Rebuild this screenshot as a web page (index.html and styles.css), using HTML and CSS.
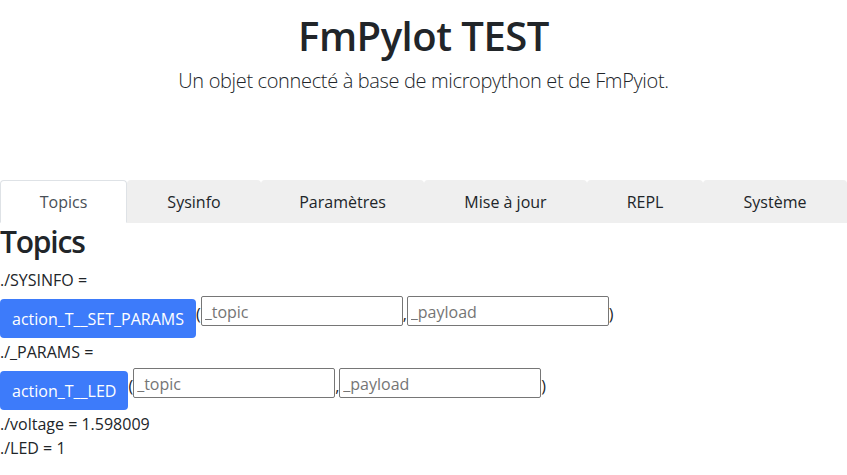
FILE: index.html
```html
<!DOCTYPE html>
<html lang="fr">
<head>
<meta charset="utf-8">
<title>FmPylot TEST</title>
<link rel="stylesheet" href="styles.css">
</head>
<body>
<header class="hero">
  <h1 class="hero-title">FmPylot TEST</h1>
  <p class="lead">Un objet connecté à base de micropython et de FmPyiot.</p>
</header>
<nav class="tabs">
  <a class="tab active">Topics</a>
  <a class="tab">Sysinfo</a>
  <a class="tab">Paramètres</a>
  <a class="tab">Mise à jour</a>
  <a class="tab">REPL</a>
  <a class="tab">Système</a>
</nav>
<section class="panel">
  <h2 class="panel-title">Topics</h2>
  <div class="line">./SYSINFO =</div>
  <div class="action-row">
    <button class="btn">action_T__SET_PARAMS</button>
    <span class="punct">(</span><input class="field" placeholder="_topic"><span class="punct">,</span><input class="field" placeholder="_payload"><span class="punct">)</span>
  </div>
  <div class="line">./_PARAMS =</div>
  <div class="action-row">
    <button class="btn">action_T__LED</button>
    <span class="punct">(</span><input class="field" placeholder="_topic"><span class="punct">,</span><input class="field" placeholder="_payload"><span class="punct">)</span>
  </div>
  <div class="line">./voltage = 1.598009</div>
  <div class="line">./LED = 1</div>
</section>
</body>
</html>
```

FILE: styles.css
```css
* { box-sizing: border-box; }
body {
  margin: 0;
  font-family: "Open Sans", "Noto Sans", sans-serif;
  font-size: 16px;
  line-height: 1.5;
  color: #212529;
  background: #fff;
}
.hero {
  text-align: center;
  padding-top: 12px;
  height: 180px;
}
.hero-title {
  margin: 0;
  font-size: 40px;
  line-height: 48px;
  font-weight: 600;
  letter-spacing: -0.5px;
}
.lead {
  margin: 6px 0 0;
  font-size: 20px;
  line-height: 30px;
  font-weight: 300;
  letter-spacing: -0.35px;
}
.tabs {
  display: grid;
  grid-template-columns: 127px 134px 163px 163px 116px 144px;
  border-bottom: 1px solid #dee2e6;
}
.tab {
  display: block;
  text-align: center;
  padding: 9px 0 7px;
  line-height: 24px;
  border: 1px solid #efefef;
  border-bottom: 0;
  border-radius: 4px 4px 0 0;
  background: #efefef;
  color: #212529;
  margin-bottom: -1px;
  height: 43px;
}
.tab.active {
  background: #fff;
  color: #495057;
  border-color: #dee2e6 #dee2e6 #fff;
  border-bottom: 1px solid #fff;
}
.panel-title {
  margin: 0 0 7px;
  font-size: 30px;
  line-height: 38px;
  font-weight: 600;
  letter-spacing: -1.2px;
}
.line {
  line-height: 24px;
}
.action-row {
  display: flex;
  align-items: flex-start;
  height: 48px;
}
.btn {
  margin-top: 7px;
  height: 39px;
  padding: 1px 12px 0;
  border: 0;
  border-radius: 4px;
  background: #3d7bfa;
  color: #fff;
  font: inherit;
  line-height: 38px;
}
.punct {
  margin-top: 10px;
  line-height: 24px;
}
.field {
  margin-top: 4px;
  width: 202px;
  height: 30px;
  border: 1px solid #767676;
  border-radius: 2px;
  padding: 1px 3px 0;
  font: inherit;
  font-size: 16px;
  color: #212529;
  background: #fff;
}
.field::placeholder {
  color: #757575;
}
```
